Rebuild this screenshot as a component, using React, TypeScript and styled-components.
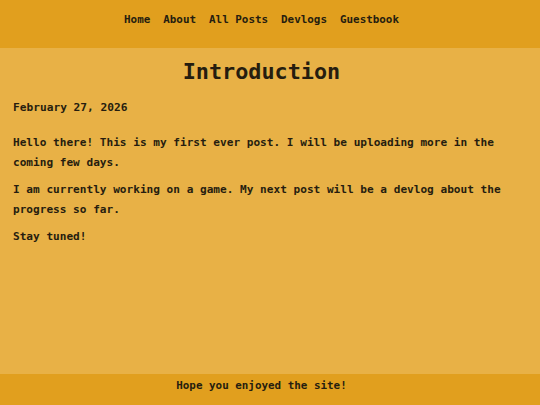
import React from "react";
import styled, { createGlobalStyle } from "styled-components";

const pixelFont = `"DejaVu Sans Mono", "Liberation Mono", monospace`;
// the original page reserves a scrollbar gutter on the right
const gutter = 17;

const GlobalStyle = createGlobalStyle`
  html, body {
    margin: 0;
    padding: 0;
    height: 100%;
  }
  #root {
    height: 100%;
  }
  body {
    background-color: #e8b146;
    color: #261d0f;
    font-family: ${pixelFont};
  }
`;

const Page = styled.div`
  display: flex;
  flex-direction: column;
  min-height: 405px;
  height: 100%;
`;

const Header = styled.header`
  height: 48px;
  background-color: #e19f1e;
  display: flex;
  justify-content: center;
  padding: 13px ${gutter}px 0 0;
  box-sizing: border-box;
`;

const Nav = styled.nav`
  display: flex;
  gap: 13px;
  align-items: flex-start;
`;

const NavLink = styled.a`
  font-size: 10.9px;
  font-weight: bold;
  color: #261d0f;
  text-decoration: none;
  line-height: 14px;
`;

const Main = styled.main`
  flex: 1;
  padding: 12px ${13 + gutter}px 0 13px;
  display: flex;
  flex-direction: column;
`;

const Title = styled.h1`
  margin: 0;
  text-align: center;
  font-size: 21.8px;
  font-weight: bold;
  line-height: 24px;
`;

const PostDate = styled.div`
  margin-top: 14px;
  font-size: 11.2px;
  font-weight: bold;
  line-height: 20px;
`;

const Body = styled.div`
  margin-top: 15px;
  display: flex;
  flex-direction: column;
  gap: 7px;
`;

const Paragraph = styled.p`
  margin: 0;
  font-size: 11.1px;
  font-weight: bold;
  line-height: 20px;
`;

const Footer = styled.footer`
  height: 31px;
  background-color: #e19f1e;
  display: flex;
  align-items: flex-start;
  justify-content: center;
  padding: 5px ${gutter}px 0 0;
  box-sizing: border-box;
  font-size: 10.9px;
  font-weight: bold;
  line-height: 14px;
`;

const links = ["Home", "About", "All Posts", "Devlogs", "Guestbook"];

export default function App() {
  return (
    <>
      <GlobalStyle />
      <Page>
        <Header>
          <Nav>
            {links.map((l) => (
              <NavLink key={l} href="#">
                {l}
              </NavLink>
            ))}
          </Nav>
        </Header>
        <Main>
          <Title>Introduction</Title>
          <PostDate>February 27, 2026</PostDate>
          <Body>
            <Paragraph>
              Hello there! This is my first ever post. I will be uploading more
              in the coming few days.
            </Paragraph>
            <Paragraph>
              I am currently working on a game. My next post will be a devlog
              about the progress so far.
            </Paragraph>
            <Paragraph>Stay tuned!</Paragraph>
          </Body>
        </Main>
        <Footer>Hope you enjoyed the site!</Footer>
      </Page>
    </>
  );
}
